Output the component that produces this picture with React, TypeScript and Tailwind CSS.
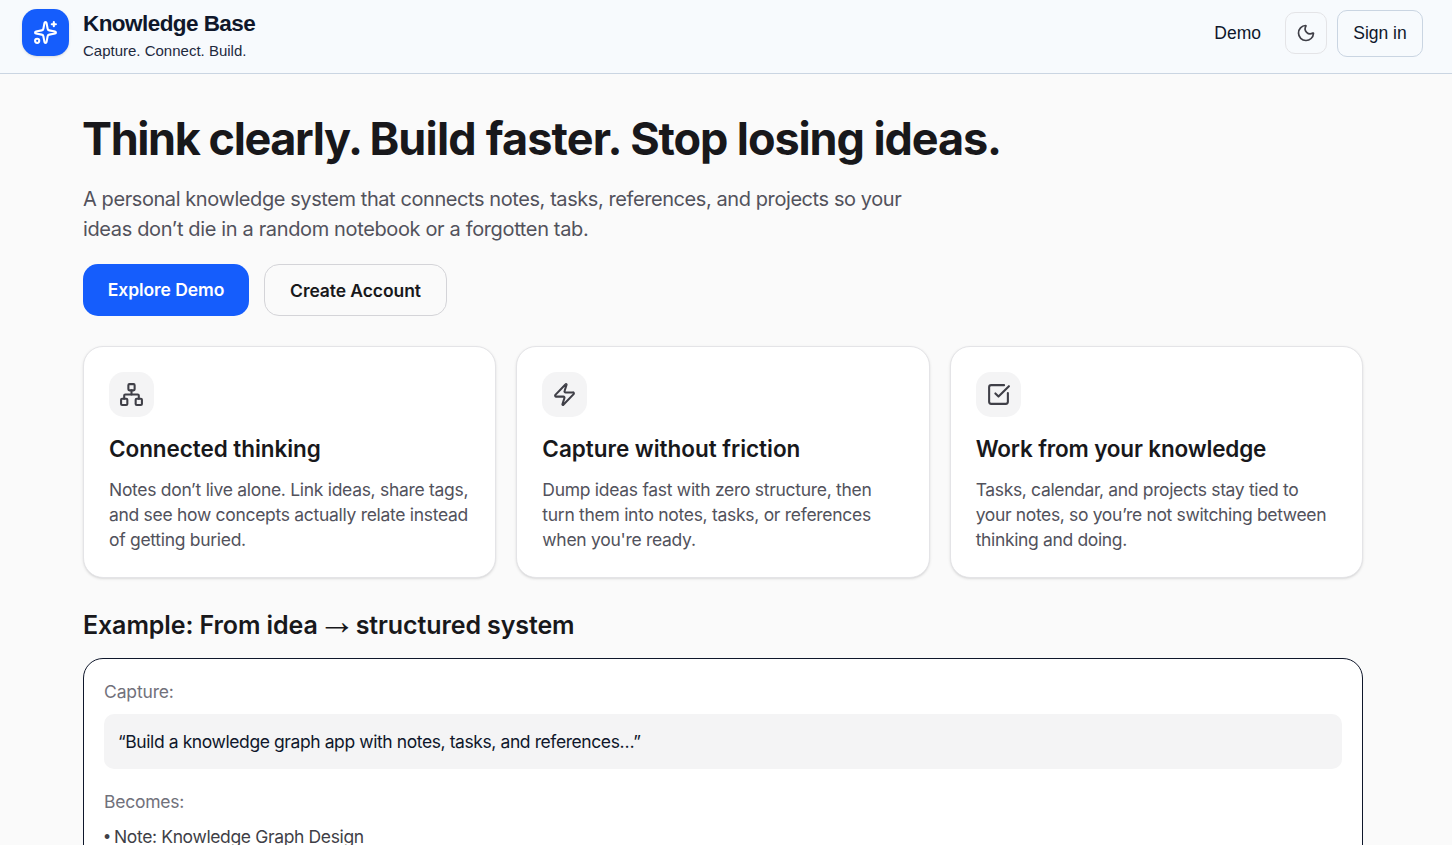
import React from "react";
import { Moon, Network, Sparkles, SquareCheckBig, Zap } from "lucide-react";

const features = [
  {
    title: "Connected thinking",
    titleClass: "tracking-[-0.06px]",
    textClass: "tracking-[-0.3px]",
    icon: Network,
    lines: [
      "Notes don’t live alone. Link ideas, share tags,",
      "and see how concepts actually relate instead",
      "of getting buried.",
    ],
  },
  {
    title: "Capture without friction",
    titleClass: "tracking-[-0.02px]",
    textClass: "tracking-[-0.29px]",
    icon: Zap,
    lines: [
      "Dump ideas fast with zero structure, then",
      "turn them into notes, tasks, or references",
      "when you're ready.",
    ],
  },
  {
    title: "Work from your knowledge",
    titleClass: "tracking-[-0.16px]",
    textClass: "tracking-[-0.35px]",
    icon: SquareCheckBig,
    lines: [
      "Tasks, calendar, and projects stay tied to",
      "your notes, so you’re not switching between",
      "thinking and doing.",
    ],
  },
];

function Header() {
  return (
    <header className="flex h-[74px] items-start justify-between border-b border-slate-300 bg-[#f7fafd] pl-[22px] pr-[29px] pt-[9px] font-['Liberation_Sans',Arial,sans-serif] text-slate-900">
      <div className="flex items-start gap-3.5">
        <div className="flex h-[47px] w-[47px] items-center justify-center rounded-[15px] bg-blue-600 text-white shadow-sm">
          <Sparkles size={25} strokeWidth={2} />
        </div>
        <div className="whitespace-nowrap">
          <div className="pt-px text-[22.5px] font-bold leading-7 tracking-[-0.56px]">
            Knowledge Base
          </div>
          <div className="mt-[3px] text-[15px] leading-5 text-slate-800">
            Capture. Connect. Build.
          </div>
        </div>
      </div>

      <nav className="flex h-[47px] items-center text-[17.5px]">
        <a className="mr-6 pt-0.5">Demo</a>
        <button
          type="button"
          aria-label="Toggle theme"
          className="mr-2.5 flex h-[42px] w-[42px] items-center justify-center rounded-[10px] border border-zinc-200 text-zinc-700"
        >
          <Moon size={20} strokeWidth={2} />
        </button>
        <button
          type="button"
          className="mt-0.5 h-[47px] w-[86px] rounded-[10px] border border-slate-300"
        >
          Sign in
        </button>
      </nav>
    </header>
  );
}

export default function App() {
  return (
    <div className="h-screen overflow-hidden bg-zinc-50 font-['Inter',sans-serif] text-zinc-900">
      <Header />

      <main className="ml-[83px] w-[1280px] whitespace-nowrap pt-10">
        {/* Hero */}
        <h1 className="-ml-px text-[45px] font-bold leading-[50px] tracking-[-1.1px]">
          <span className="tracking-[-1.4px]">Think clearly. </span>
          <span className="tracking-[-0.82px]">Build faster. </span>
          Stop losing ideas.
        </h1>
        <p className="mt-5 text-[20px] leading-[30px] text-zinc-600">
          <span className="block tracking-[-0.42px]">
            A personal knowledge system that connects notes, tasks, references,
            and projects so your
          </span>
          <span className="block tracking-[-0.36px]">
            ideas don’t die in a random notebook or a forgotten tab.
          </span>
        </p>
        <div className="mt-5 flex gap-[15px] text-[17.5px] tracking-[-0.08px]">
          <button
            type="button"
            className="h-[52px] w-[166px] rounded-[15px] bg-blue-600 font-semibold text-white"
          >
            Explore Demo
          </button>
          <button
            type="button"
            className="h-[52px] w-[183px] rounded-[15px] border border-zinc-300 pt-0.5 font-semibold"
          >
            Create Account
          </button>
        </div>

        {/* Features */}
        <div className="mt-[30px] grid grid-cols-3 gap-5">
          {features.map(({ title, titleClass, textClass, icon: Icon, lines }) => (
            <div
              key={title}
              className="rounded-[20px] border border-zinc-200 bg-white p-[25px] shadow-sm"
            >
              <div className="flex h-[45px] w-[45px] items-center justify-center rounded-[15px] bg-zinc-100 text-zinc-700">
                <Icon size={25} />
              </div>
              <h3
                className={`mt-3.5 text-[22.5px] font-semibold leading-[35px] ${titleClass}`}
              >
                {title}
              </h3>
              <p
                className={`mt-[11px] text-[17.5px] leading-[25px] text-zinc-600 ${textClass}`}
              >
                {lines.map((line) => (
                  <span key={line} className="block">
                    {line}
                  </span>
                ))}
              </p>
            </div>
          ))}
        </div>

        {/* Example */}
        <h2 className="mt-[30px] flex h-[35px] text-[25px] font-semibold leading-[35px] tracking-[-0.1px]">
          <span>Example: From idea</span>
          <span className="w-[38px] pr-0.5 text-center font-['Liberation_Sans',sans-serif] text-[38px] font-normal leading-[27px] tracking-normal">
            →
          </span>
          <span>structured system</span>
        </h2>
        <div className="mt-[15px] h-[300px] rounded-[20px] border border-slate-900 bg-white p-5 text-[17.5px] leading-[25px]">
          <div className="tracking-[-0.15px] text-zinc-500">Capture:</div>
          <div className="mt-2.5 rounded-[10px] bg-zinc-100 py-[15px] pl-3.5 tracking-[-0.41px] text-slate-900">
            “Build a knowledge graph app with notes, tasks, and references…”
          </div>
          <div className="mt-5 tracking-[-0.25px] text-zinc-500">Becomes:</div>
          <div className="mt-2.5 flex tracking-[-0.36px] text-zinc-700">
            <span className="w-2.5 pt-px font-['Liberation_Sans',sans-serif]">
              •
            </span>
            Note: Knowledge Graph Design
          </div>
        </div>
      </main>
    </div>
  );
}
